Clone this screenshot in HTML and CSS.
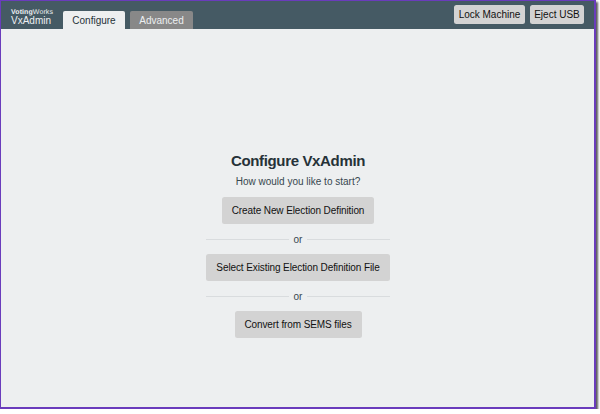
FILE: index.html
```html
<!DOCTYPE html>
<html lang="en">
<head>
<meta charset="utf-8">
<title>VxAdmin</title>
<link rel="stylesheet" href="styles.css">
</head>
<body>
<div class="window">
  <header class="navbar">
    <div class="brand">
      <div class="maker"><b>Voting</b>Works</div>
      <div class="product">VxAdmin</div>
    </div>
    <nav class="tabs">
      <a class="tab active">Configure</a>
      <a class="tab">Advanced</a>
    </nav>
    <div class="actions">
      <button class="small lock">Lock Machine</button>
      <button class="small eject">Eject USB</button>
    </div>
  </header>
  <main class="content">
    <h1>Configure VxAdmin</h1>
    <p>How would you like to start?</p>
    <div class="options">
      <button class="option create">Create New Election Definition</button>
      <div class="divider">or</div>
      <button class="option select">Select Existing Election Definition File</button>
      <div class="divider">or</div>
      <button class="option convert">Convert from SEMS files</button>
    </div>
  </main>
</div>
</body>
</html>
```
FILE: styles.css
```css
* { box-sizing: border-box; }
body {
  margin: 0;
  background: #fff;
  font-family: "Liberation Sans", Arial, sans-serif;
  font-size: 10px;
  color: #37474f;
  overflow: hidden;
}
.window {
  width: 596px;
  height: 409px;
  border: 1px solid #6a3cbc;
  border-right-width: 2px;
  border-bottom-width: 2px;
  background: #edeff0;
  box-shadow: 2px 2px 2px rgba(0, 0, 0, .65);
  display: flex;
  flex-direction: column;
}
.navbar {
  height: 28px;
  flex: none;
  background: #455a64;
  display: flex;
  padding: 0 10px;
}
.brand { width: 52px; padding-top: 8px; color: #eceff1; }
.maker { font-size: 7px; line-height: 7px; text-rendering: geometricPrecision; letter-spacing: .1px; }
.product { font-size: 10px; line-height: 10px; }
.tabs { display: flex; align-items: flex-end; gap: 5px; }
.tab {
  width: 62px;
  height: 18px;
  border-radius: 2px 2px 0 0;
  background: #888;
  color: #eceff1;
  text-align: center;
  line-height: 19px;
}
.tab:not(.active) { width: 63px; }
.tab.active { background: #edeff0; color: #263238; }
.actions { margin-left: auto; display: flex; gap: 5px; padding-top: 4px; }
button {
  border: 0;
  padding: 0;
  font: inherit;
  color: #111;
  background: #d3d3d3;
  border-radius: 2.5px;
  white-space: nowrap;
}
.small { height: 19px; }
.lock { width: 71px; }
.eject { width: 54px; }
.content {
  display: flex;
  flex-direction: column;
  align-items: center;
  padding-top: 122px;
  padding-left: 1px;
}
h1 { margin: 0; font-size: 15px; line-height: 20px; letter-spacing: -.35px; color: #263238; }
p { margin: 3px 0 8px; line-height: 15px; }
.options {
  width: 184px;
  display: flex;
  flex-direction: column;
  align-items: center;
}
.option { height: 27px; letter-spacing: -.1px; }
.create { width: 152px; }
.select { width: 184px; }
.convert { width: 127px; }
.divider {
  width: 100%;
  height: 30px;
  display: flex;
  align-items: center;
  gap: 5px;
}
.divider::before, .divider::after {
  content: "";
  flex: 1;
  height: 1px;
  background: #d9dcde;
}
```
